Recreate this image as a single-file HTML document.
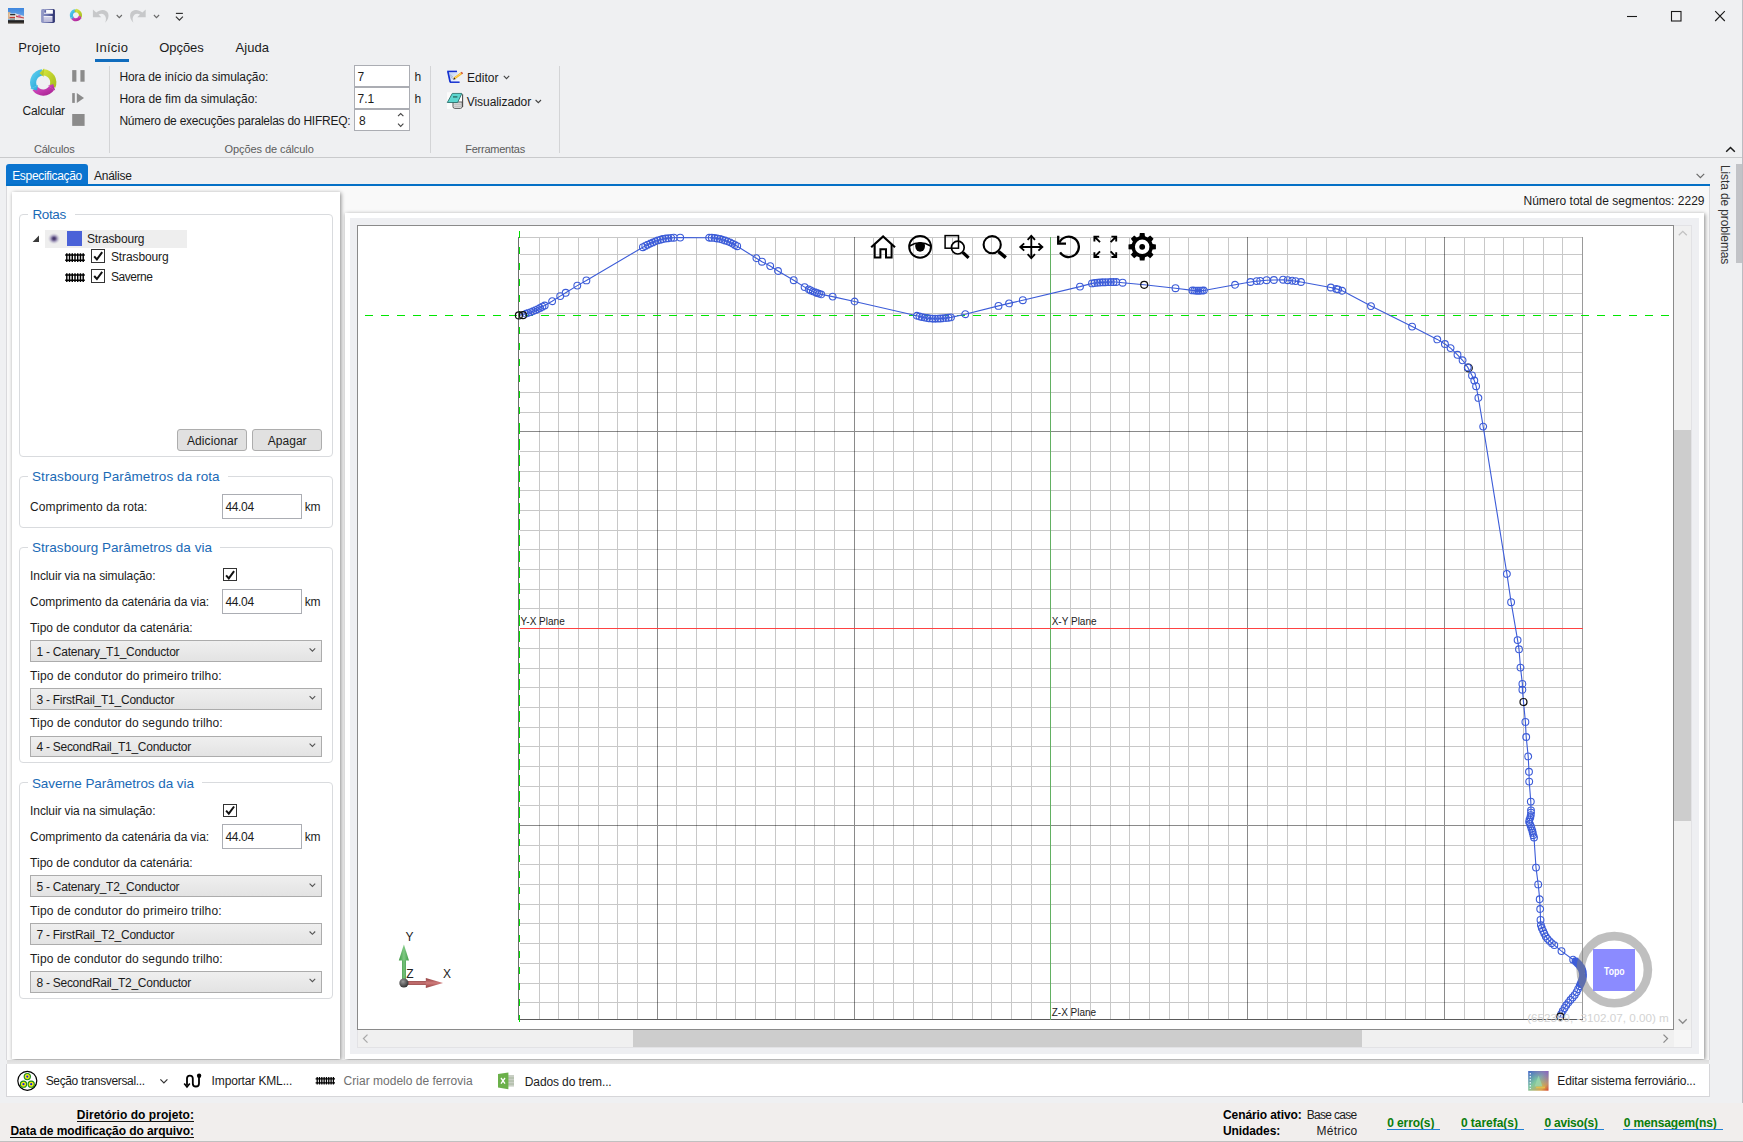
<!DOCTYPE html>
<html lang="pt"><head><meta charset="utf-8"><title>Railway</title>
<style>
html,body{margin:0;padding:0}
body{width:1743px;height:1142px;overflow:hidden;position:relative;background:#eff0f2;font-family:"Liberation Sans",sans-serif;}
.b{position:absolute;box-sizing:border-box}
.t{position:absolute;white-space:nowrap;line-height:16px;font-family:"Liberation Sans",sans-serif}
svg{position:absolute;left:0;top:0;overflow:visible}
svg text{font-family:"Liberation Sans",sans-serif}
</style></head><body>
<span class="t" style="left:18.20px;top:40px;font-size:13px;color:#1b1b1b;letter-spacing:0.135px;">Projeto</span>
<span class="t" style="left:95.60px;top:40px;font-size:13px;color:#1b1b1b;letter-spacing:0.246px;">Início</span>
<span class="t" style="left:159.30px;top:40px;font-size:13px;color:#1b1b1b;letter-spacing:-0.080px;">Opções</span>
<span class="t" style="left:235.60px;top:40px;font-size:13px;color:#1b1b1b;letter-spacing:0.037px;">Ajuda</span>
<div class="b" style="left:95px;top:59px;width:34px;height:3px;background:#0f6cbd;"></div>
<span class="t" style="left:22.50px;top:103px;font-size:12px;color:#1b1b1b;letter-spacing:-0.202px;">Calcular</span>
<span class="t" style="left:33.90px;top:141px;font-size:11px;color:#5c5c5c;letter-spacing:-0.198px;">Cálculos</span>
<div class="b" style="left:109px;top:66px;width:1px;height:87px;background:#d3d4d6;"></div>
<span class="t" style="left:119.40px;top:69px;font-size:12px;color:#1b1b1b;letter-spacing:-0.093px;">Hora de início da simulação:</span>
<span class="t" style="left:119.40px;top:91px;font-size:12px;color:#1b1b1b;letter-spacing:-0.050px;">Hora de fim da simulação:</span>
<span class="t" style="left:119.40px;top:113px;font-size:12px;color:#1b1b1b;letter-spacing:-0.246px;">Número de execuções paralelas do HIFREQ:</span>
<div class="b" style="left:354px;top:65px;width:56px;height:22px;background:#fff;border:1px solid #abadb3;"></div>
<div class="b" style="left:354px;top:87px;width:56px;height:22px;background:#fff;border:1px solid #abadb3;"></div>
<div class="b" style="left:354px;top:109px;width:56px;height:22px;background:#fff;border:1px solid #abadb3;"></div>
<span class="t" style="left:357.60px;top:69px;font-size:12px;color:#1b1b1b;">7</span>
<span class="t" style="left:357.60px;top:91px;font-size:12px;color:#1b1b1b;">7.1</span>
<span class="t" style="left:358.90px;top:113px;font-size:12px;color:#1b1b1b;">8</span>
<span class="t" style="left:414.40px;top:69px;font-size:12px;color:#1b1b1b;">h</span>
<span class="t" style="left:414.40px;top:91px;font-size:12px;color:#1b1b1b;">h</span>
<span class="t" style="left:224.60px;top:141px;font-size:11px;color:#5c5c5c;letter-spacing:-0.081px;">Opções de cálculo</span>
<div class="b" style="left:430px;top:66px;width:1px;height:87px;background:#d3d4d6;"></div>
<span class="t" style="left:467.10px;top:70px;font-size:12px;color:#1b1b1b;letter-spacing:0.010px;">Editor</span>
<span class="t" style="left:466.80px;top:94px;font-size:12px;color:#1b1b1b;letter-spacing:-0.068px;">Visualizador</span>
<span class="t" style="left:465.20px;top:141px;font-size:11px;color:#5c5c5c;letter-spacing:-0.236px;">Ferramentas</span>
<div class="b" style="left:559px;top:66px;width:1px;height:87px;background:#d3d4d6;"></div>
<div class="b" style="left:0px;top:157px;width:1743px;height:1px;background:#c9cacc;"></div>
<div class="b" style="left:6px;top:164px;width:82px;height:21px;background:#0b74cf;border-radius:3px 3px 0 0;"></div>
<span class="t" style="left:12.20px;top:168px;font-size:12px;color:#fff;letter-spacing:-0.328px;">Especificação</span>
<span class="t" style="left:94.00px;top:168px;font-size:12px;color:#1b1b1b;letter-spacing:-0.243px;">Análise</span>
<div class="b" style="left:6px;top:186px;width:1704px;height:874px;background:#f9f9f9;border-left:1px solid #d9d9dc;border-right:1px solid #d9d9dc;"></div>
<div class="b" style="left:6px;top:184px;width:1704px;height:2.4px;background:#0470c6;"></div>
<div class="b" style="left:1736px;top:164px;width:7px;height:99px;background:#c2c3c7;"></div>
<span class="t" style="left:1733px;top:164.6px;font-size:12px;color:#333;transform-origin:0 0;transform:rotate(90deg);letter-spacing:-0.123px;">Lista de problemas</span>
<div class="b" style="left:1742px;top:0px;width:1px;height:1103px;background:#bbbcc1;"></div>
<div class="b" style="left:12px;top:192px;width:328px;height:867px;background:#fff;box-shadow:1px 1px 4px rgba(0,0,0,.45);"></div>
<div class="b" style="left:19px;top:214px;width:314px;height:243px;border:1px solid #d9dbde;border-radius:4px;"></div>
<div class="b" style="left:19px;top:476px;width:314px;height:52px;border:1px solid #d9dbde;border-radius:4px;"></div>
<div class="b" style="left:19px;top:547px;width:314px;height:216px;border:1px solid #d9dbde;border-radius:4px;"></div>
<div class="b" style="left:19px;top:782px;width:314px;height:217px;border:1px solid #d9dbde;border-radius:4px;"></div>
<div class="b" style="left:28.1px;top:212px;width:46.6px;height:6px;background:#fff;"></div>
<span class="t" style="left:32.40px;top:207px;font-size:13.5px;color:#1a6ab6;letter-spacing:-0.367px;">Rotas</span>
<div class="b" style="left:27.700000000000003px;top:474px;width:200.4px;height:6px;background:#fff;"></div>
<span class="t" style="left:32.00px;top:469px;font-size:13.5px;color:#1a6ab6;letter-spacing:0.080px;">Strasbourg Parâmetros da rota</span>
<div class="b" style="left:27.700000000000003px;top:545px;width:192.8px;height:6px;background:#fff;"></div>
<span class="t" style="left:32.00px;top:540px;font-size:13.5px;color:#1a6ab6;letter-spacing:0.024px;">Strasbourg Parâmetros da via</span>
<div class="b" style="left:27.6px;top:780px;width:174.8px;height:6px;background:#fff;"></div>
<span class="t" style="left:31.90px;top:776px;font-size:13.5px;color:#1a6ab6;letter-spacing:-0.066px;">Saverne Parâmetros da via</span>
<div class="b" style="left:45px;top:230px;width:142px;height:18px;background:#eeeeee;"></div>
<div class="b" style="left:67px;top:231px;width:15px;height:15px;background:#4a62d8;"></div>
<span class="t" style="left:87.00px;top:231px;font-size:12px;color:#1b1b1b;letter-spacing:-0.134px;">Strasbourg</span>
<span class="t" style="left:110.90px;top:249px;font-size:12px;color:#1b1b1b;letter-spacing:-0.100px;">Strasbourg</span>
<span class="t" style="left:110.90px;top:269px;font-size:12px;color:#1b1b1b;letter-spacing:-0.450px;">Saverne</span>
<div class="b" style="left:91px;top:249px;width:14px;height:14px;background:#fff;border:1px solid #333;"></div>
<div class="b" style="left:91px;top:269px;width:14px;height:13.5px;background:#fff;border:1px solid #333;"></div>
<div class="b" style="left:177px;top:429px;width:70px;height:21.5px;background:#e1e1e1;border:1px solid #adadad;border-radius:3px;"></div>
<div class="b" style="left:252px;top:429px;width:70px;height:21.5px;background:#e1e1e1;border:1px solid #adadad;border-radius:3px;"></div>
<span class="t" style="left:186.90px;top:433px;font-size:12px;color:#1b1b1b;letter-spacing:0.109px;">Adicionar</span>
<span class="t" style="left:267.80px;top:433px;font-size:12px;color:#1b1b1b;letter-spacing:0.021px;">Apagar</span>
<div class="b" style="left:222px;top:493.5px;width:80px;height:25px;background:#fff;border:1px solid #abadb3;"></div>
<span class="t" style="left:30.10px;top:499px;font-size:12px;color:#1b1b1b;letter-spacing:0.066px;">Comprimento da rota:</span>
<span class="t" style="left:225.40px;top:499px;font-size:12px;color:#1b1b1b;letter-spacing:-0.333px;">44.04</span>
<span class="t" style="left:304.70px;top:499px;font-size:12px;color:#1b1b1b;letter-spacing:-0.197px;">km</span>
<span class="t" style="left:30.10px;top:568px;font-size:12px;color:#1b1b1b;letter-spacing:-0.111px;">Incluir via na simulação:</span>
<div class="b" style="left:223px;top:568px;width:14px;height:13px;background:#fff;border:1px solid #333;"></div>
<span class="t" style="left:30.10px;top:594px;font-size:12px;color:#1b1b1b;letter-spacing:-0.032px;">Comprimento da catenária da via:</span>
<div class="b" style="left:222.2px;top:588.5px;width:79.6px;height:25.4px;background:#fff;border:1px solid #abadb3;"></div>
<span class="t" style="left:225.40px;top:594px;font-size:12px;color:#1b1b1b;letter-spacing:-0.333px;">44.04</span>
<span class="t" style="left:304.70px;top:594px;font-size:12px;color:#1b1b1b;letter-spacing:-0.197px;">km</span>
<span class="t" style="left:30.10px;top:620px;font-size:12px;color:#1b1b1b;letter-spacing:0.009px;">Tipo de condutor da catenária:</span>
<div class="b" style="left:30px;top:640.2px;width:292px;height:21.4px;border:1px solid #acacac;background:linear-gradient(#efefef,#e3e3e3);"></div>
<span class="t" style="left:36.40px;top:644px;font-size:12px;color:#1b1b1b;letter-spacing:-0.231px;">1 - Catenary_T1_Conductor</span>
<span class="t" style="left:30.10px;top:668px;font-size:12px;color:#1b1b1b;letter-spacing:0.167px;">Tipo de condutor do primeiro trilho:</span>
<div class="b" style="left:30px;top:688.4px;width:292px;height:21.2px;border:1px solid #acacac;background:linear-gradient(#efefef,#e3e3e3);"></div>
<span class="t" style="left:36.40px;top:692px;font-size:12px;color:#1b1b1b;letter-spacing:-0.242px;">3 - FirstRail_T1_Conductor</span>
<span class="t" style="left:30.10px;top:715px;font-size:12px;color:#1b1b1b;letter-spacing:0.125px;">Tipo de condutor do segundo trilho:</span>
<div class="b" style="left:30px;top:736.4px;width:292px;height:20.4px;border:1px solid #acacac;background:linear-gradient(#efefef,#e3e3e3);"></div>
<span class="t" style="left:36.40px;top:739px;font-size:12px;color:#1b1b1b;letter-spacing:-0.255px;">4 - SecondRail_T1_Conductor</span>
<span class="t" style="left:30.10px;top:803px;font-size:12px;color:#1b1b1b;letter-spacing:-0.111px;">Incluir via na simulação:</span>
<div class="b" style="left:223px;top:804px;width:14px;height:13px;background:#fff;border:1px solid #333;"></div>
<span class="t" style="left:30.10px;top:829px;font-size:12px;color:#1b1b1b;letter-spacing:-0.032px;">Comprimento da catenária da via:</span>
<div class="b" style="left:222.2px;top:824.1px;width:79.6px;height:25.4px;background:#fff;border:1px solid #abadb3;"></div>
<span class="t" style="left:225.40px;top:829px;font-size:12px;color:#1b1b1b;letter-spacing:-0.333px;">44.04</span>
<span class="t" style="left:304.70px;top:829px;font-size:12px;color:#1b1b1b;letter-spacing:-0.197px;">km</span>
<span class="t" style="left:30.10px;top:855px;font-size:12px;color:#1b1b1b;letter-spacing:0.009px;">Tipo de condutor da catenária:</span>
<div class="b" style="left:30px;top:875.2px;width:292px;height:21.4px;border:1px solid #acacac;background:linear-gradient(#efefef,#e3e3e3);"></div>
<span class="t" style="left:36.40px;top:879px;font-size:12px;color:#1b1b1b;letter-spacing:-0.231px;">5 - Catenary_T2_Conductor</span>
<span class="t" style="left:30.10px;top:903px;font-size:12px;color:#1b1b1b;letter-spacing:0.167px;">Tipo de condutor do primeiro trilho:</span>
<div class="b" style="left:30px;top:923.4px;width:292px;height:21.2px;border:1px solid #acacac;background:linear-gradient(#efefef,#e3e3e3);"></div>
<span class="t" style="left:36.40px;top:927px;font-size:12px;color:#1b1b1b;letter-spacing:-0.242px;">7 - FirstRail_T2_Conductor</span>
<span class="t" style="left:30.10px;top:951px;font-size:12px;color:#1b1b1b;letter-spacing:0.125px;">Tipo de condutor do segundo trilho:</span>
<div class="b" style="left:30px;top:971.4px;width:292px;height:21.3px;border:1px solid #acacac;background:linear-gradient(#efefef,#e3e3e3);"></div>
<span class="t" style="left:36.40px;top:975px;font-size:12px;color:#1b1b1b;letter-spacing:-0.255px;">8 - SecondRail_T2_Conductor</span>
<div class="b" style="left:345px;top:213px;width:1359px;height:846px;background:#fff;box-shadow:1px 1px 4px rgba(0,0,0,.45);"></div>
<div class="b" style="left:350px;top:218px;width:1349px;height:836px;background:#eeeff2;"></div>
<div class="b" style="left:357px;top:225px;width:1335px;height:823px;background:#f0f0f0;border:1px solid #e2e2e5;"></div>
<div class="b" style="left:357px;top:225px;width:1317px;height:805px;background:#fff;border:1px solid #8a8a8a;"></div>
<div class="b" style="left:1674px;top:430px;width:17px;height:390.5px;background:#cdcdcd;"></div>
<div class="b" style="left:633.2px;top:1030px;width:728.4px;height:17px;background:#cdcdcd;"></div>
<div class="b" style="left:1674px;top:1030px;width:17px;height:17px;background:#f6f6f6;"></div>
<span class="t" style="left:1523.50px;top:193px;font-size:12px;color:#1b1b1b;letter-spacing:0.007px;">Número total de segmentos: 2229</span>
<div class="b" style="left:7px;top:1059.5px;width:1702px;height:4.5px;background:linear-gradient(#dcdcdc,#e6e6e6);"></div>
<div class="b" style="left:6px;top:1064px;width:1704px;height:32.5px;background:#fff;border:1px solid #d6d6d9;border-top:none;"></div>
<span class="t" style="left:45.70px;top:1073px;font-size:12px;color:#1b1b1b;letter-spacing:-0.355px;">Seção transversal...</span>
<span class="t" style="left:211.60px;top:1073px;font-size:12px;color:#1b1b1b;letter-spacing:-0.135px;">Importar KML...</span>
<span class="t" style="left:343.60px;top:1073px;font-size:12px;color:#707070;letter-spacing:0.012px;">Criar modelo de ferrovia</span>
<span class="t" style="left:524.80px;top:1074px;font-size:12px;color:#1b1b1b;letter-spacing:-0.120px;">Dados do trem...</span>
<span class="t" style="left:1557.30px;top:1073px;font-size:12px;color:#1b1b1b;letter-spacing:-0.147px;">Editar sistema ferroviário...</span>
<div class="b" style="left:0px;top:1103px;width:1743px;height:39px;background:#f1eeed;"></div>
<div class="b" style="left:0px;top:1140.5px;width:1743px;height:1.5px;background:#c0c0c0;"></div>
<span class="t" style="left:76.80px;top:1107px;font-size:12px;color:#000;letter-spacing:0.055px;font-weight:700;">Diretório do projeto:</span>
<div class="b" style="left:76.5px;top:1120.6px;width:117.4px;height:1px;background:#111"></div>
<span class="t" style="left:10.50px;top:1123px;font-size:12px;color:#000;letter-spacing:-0.066px;font-weight:700;">Data de modificação do arquivo:</span>
<div class="b" style="left:10.2px;top:1136.6px;width:183.7px;height:1px;background:#111"></div>
<span class="t" style="left:1223.00px;top:1107px;font-size:12px;color:#000;letter-spacing:-0.094px;font-weight:700;">Cenário ativo:</span>
<span class="t" style="left:1306.70px;top:1107px;font-size:12px;color:#1b1b1b;letter-spacing:-0.679px;">Base case</span>
<span class="t" style="left:1223.00px;top:1123px;font-size:12px;color:#000;letter-spacing:-0.101px;font-weight:700;">Unidades:</span>
<span class="t" style="left:1316.60px;top:1123px;font-size:12px;color:#1b1b1b;letter-spacing:0.226px;">Métrico</span>
<span class="t" style="left:1387.20px;top:1115px;font-size:12px;color:#0b7d0b;letter-spacing:-0.102px;font-weight:700;">0 erro(s)</span>
<div class="b" style="left:1386.9px;top:1128.6px;width:53.5px;height:1px;background:#1e7fd6"></div>
<span class="t" style="left:1460.90px;top:1115px;font-size:12px;color:#0b7d0b;letter-spacing:-0.026px;font-weight:700;">0 tarefa(s)</span>
<div class="b" style="left:1460.6px;top:1128.6px;width:63.4px;height:1px;background:#1e7fd6"></div>
<span class="t" style="left:1544.50px;top:1115px;font-size:12px;color:#0b7d0b;letter-spacing:-0.218px;font-weight:700;">0 aviso(s)</span>
<div class="b" style="left:1544.2px;top:1128.6px;width:59.7px;height:1px;background:#1e7fd6"></div>
<span class="t" style="left:1623.70px;top:1115px;font-size:12px;color:#0b7d0b;letter-spacing:-0.131px;font-weight:700;">0 mensagem(ns)</span>
<div class="b" style="left:1623.4px;top:1128.6px;width:99.3px;height:1px;background:#1e7fd6"></div>
<svg width="1743" height="1142" viewBox="0 0 1743 1142"><g shape-rendering="crispEdges" fill="none" stroke-width="1">
<path d="M539.5,237.0V1019.5M558.5,237.0V1019.5M578.5,237.0V1019.5M598.5,237.0V1019.5M617.5,237.0V1019.5M637.5,237.0V1019.5M676.5,237.0V1019.5M696.5,237.0V1019.5M716.5,237.0V1019.5M735.5,237.0V1019.5M755.5,237.0V1019.5M775.5,237.0V1019.5M795.5,237.0V1019.5M814.5,237.0V1019.5M834.5,237.0V1019.5M873.5,237.0V1019.5M893.5,237.0V1019.5M913.5,237.0V1019.5M932.5,237.0V1019.5M952.5,237.0V1019.5M972.5,237.0V1019.5M991.5,237.0V1019.5M1011.5,237.0V1019.5M1031.5,237.0V1019.5M1070.5,237.0V1019.5M1090.5,237.0V1019.5M1110.5,237.0V1019.5M1129.5,237.0V1019.5M1149.5,237.0V1019.5M1169.5,237.0V1019.5M1188.5,237.0V1019.5M1208.5,237.0V1019.5M1228.5,237.0V1019.5M1267.5,237.0V1019.5M1287.5,237.0V1019.5M1306.5,237.0V1019.5M1326.5,237.0V1019.5M1346.5,237.0V1019.5M1366.5,237.0V1019.5M1385.5,237.0V1019.5M1405.5,237.0V1019.5M1425.5,237.0V1019.5M1464.5,237.0V1019.5M1484.5,237.0V1019.5M1503.5,237.0V1019.5M1523.5,237.0V1019.5M1543.5,237.0V1019.5M1562.5,237.0V1019.5M1582.5,237.0V1019.5M519.5,254.5H1583.0M519.5,274.5H1583.0M519.5,293.5H1583.0M519.5,313.5H1583.0M519.5,333.5H1583.0M519.5,352.5H1583.0M519.5,372.5H1583.0M519.5,392.5H1583.0M519.5,412.5H1583.0M519.5,451.5H1583.0M519.5,471.5H1583.0M519.5,490.5H1583.0M519.5,510.5H1583.0M519.5,530.5H1583.0M519.5,549.5H1583.0M519.5,569.5H1583.0M519.5,589.5H1583.0M519.5,608.5H1583.0M519.5,648.5H1583.0M519.5,668.5H1583.0M519.5,687.5H1583.0M519.5,707.5H1583.0M519.5,727.5H1583.0M519.5,746.5H1583.0M519.5,766.5H1583.0M519.5,786.5H1583.0M519.5,805.5H1583.0M519.5,845.5H1583.0M519.5,864.5H1583.0M519.5,884.5H1583.0M519.5,904.5H1583.0M519.5,923.5H1583.0M519.5,943.5H1583.0M519.5,963.5H1583.0M519.5,983.5H1583.0M519.5,1002.5H1583.0M519.5,237.5H1583.0" stroke="rgba(0,0,0,0.215)"/>
<path d="M657.5,237.0V1019.5M854.5,237.0V1019.5M1247.5,237.0V1019.5M1444.5,237.0V1019.5M519.5,431.5H1583.0M519.5,825.5H1583.0" stroke="rgba(0,0,0,0.46)"/>
<path d="M1582.5,237.0V1019.5" stroke="#9a9a9a"/>
<path d="M518.5,237.0V1020.0" stroke="#707070"/>
<path d="M518,1019.5H1583.0" stroke="#5a5a5a"/>
<path d="M1050.5,237.0V1019.5" stroke="#62b062"/>
<path d="M519.5,628.5H1583.0" stroke="#ff4242"/>
<path d="M365,315.5H1669" stroke="#00e600" stroke-dasharray="8 8"/>
<path d="M519.5,231.3V423" stroke="#00e000" stroke-dasharray="6.4 9.6"/>
<path d="M519.5,423.3V839" stroke="#00e000" stroke-dasharray="10.4 5.6"/>
<path d="M519.5,839.3V1022.5" stroke="#00e000" stroke-dasharray="7 9"/>
</g>
<text x="520.6" y="624.7" font-size="10" fill="#222">Y-X Plane</text>
<text x="1051.7" y="624.7" font-size="10" fill="#222">X-Y Plane</text>
<text x="1051.7" y="1015.7" font-size="10" fill="#222">Z-X Plane</text>
<g fill="none" stroke="#111" stroke-width="1.2">
<circle cx="1468.4" cy="367.9" r="3.9"/>
</g>
<g fill="none" stroke="#3c5cd8" stroke-width="1.1">
<polyline points="518.9,315.4 525.8,313.8 531.0,312.0 537.0,309.5 544.7,305.5 552.1,301.2 560.2,296.1 565.7,292.8 577.3,285.6 586.4,280.4 642.9,247.2 647.0,245.0 650.5,243.3 654.0,241.8 657.5,240.5 661.0,239.5 664.5,238.7 668.0,238.2 671.0,237.9 673.8,237.7 680.2,237.6 709.1,237.7 712.0,237.8 715.0,238.1 718.0,238.6 721.0,239.3 724.0,240.2 727.0,241.2 730.0,242.4 733.0,243.8 737.2,246.2 756.4,258.2 762.0,261.7 770.2,266.1 778.0,271.0 793.7,280.2 804.6,287.1 808.7,289.4 811.5,290.8 814.0,291.9 816.0,292.7 818.0,293.4 821.3,294.4 832.6,296.6 854.6,301.5 916.8,315.8 921.0,316.9 924.0,317.5 927.0,318.0 930.0,318.4 932.6,318.7 936.0,318.7 939.0,318.6 942.0,318.4 945.0,318.1 948.0,317.7 951.0,317.4 965.2,314.2 998.5,305.9 1009.0,303.4 1022.8,300.2 1080.0,286.6 1092.0,283.4 1095.0,283.0 1098.0,282.7 1101.0,282.4 1104.0,282.2 1107.0,282.1 1110.0,282.0 1113.0,282.0 1116.2,282.0 1122.6,282.7 1144.2,284.8 1175.5,288.2 1192.5,290.4 1195.0,290.6 1197.5,290.7 1200.0,290.7 1202.0,290.6 1203.9,290.5 1235.1,284.8 1250.5,282.0 1256.7,281.1 1260.2,280.9 1266.6,280.2 1273.9,280.0 1283.1,279.7 1287.7,280.2 1292.3,280.7 1295.7,281.1 1301.0,282.0 1330.8,287.5 1336.3,288.9 1338.2,289.4 1342.3,290.8 1371.0,306.1 1412.1,326.6 1437.3,339.4 1444.9,344.0 1450.6,348.1 1457.5,354.8 1462.6,360.3 1467.8,367.4 1472.0,375.4 1474.3,380.5 1476.1,386.2 1478.4,397.9 1483.2,426.6 1506.9,573.9 1511.1,602.2 1517.6,640.1 1519.0,649.3 1520.5,667.6 1522.4,683.9 1522.4,689.7 1523.5,702.0 1525.4,721.9 1526.2,737.0 1528.2,756.4 1529.0,771.8 1529.2,781.6 1530.8,801.6 1531.0,810.4 1531.0,814.0 1530.5,817.0 1529.5,819.5 1529.0,821.5 1530.0,824.0 1530.8,826.1 1531.5,828.5 1532.5,831.4 1533.2,834.5 1534.0,837.5 1536.0,867.6 1538.2,884.4 1539.7,899.3 1540.2,909.0 1540.5,919.9 1540.9,925.1 1541.8,928.0 1543.2,931.0 1544.5,934.0 1546.1,937.0 1548.0,939.3 1549.9,941.4 1552.0,943.3 1554.3,945.1 1561.5,951.1 1573.2,959.7 1575.5,961.3 1577.4,963.0 1579.0,964.8 1580.3,966.5 1581.5,968.2 1582.3,970.2 1582.8,972.2 1583.0,974.2 1583.0,976.2 1582.7,978.2 1582.1,980.1 1581.4,982.1 1580.5,984.1 1579.6,986.1 1578.4,988.6 1577.2,991.0 1575.9,993.5 1574.2,995.5 1572.5,997.5 1570.7,999.5 1568.5,1002.5 1566.2,1005.4 1564.3,1008.4 1562.5,1011.4 1561.3,1014.0 1560.3,1016.6"/>
<path d="M522.4,313.8a3.4,3.4 0 1 0 6.8,0a3.4,3.4 0 1 0 -6.8,0M524.8,313.0a3.4,3.4 0 1 0 6.8,0a3.4,3.4 0 1 0 -6.8,0M527.3,312.1a3.4,3.4 0 1 0 6.8,0a3.4,3.4 0 1 0 -6.8,0M529.7,311.1a3.4,3.4 0 1 0 6.8,0a3.4,3.4 0 1 0 -6.8,0M532.1,310.1a3.4,3.4 0 1 0 6.8,0a3.4,3.4 0 1 0 -6.8,0M534.4,309.1a3.4,3.4 0 1 0 6.8,0a3.4,3.4 0 1 0 -6.8,0M536.7,307.9a3.4,3.4 0 1 0 6.8,0a3.4,3.4 0 1 0 -6.8,0M539.0,306.7a3.4,3.4 0 1 0 6.8,0a3.4,3.4 0 1 0 -6.8,0M541.3,305.5a3.4,3.4 0 1 0 6.8,0a3.4,3.4 0 1 0 -6.8,0M548.7,301.2a3.4,3.4 0 1 0 6.8,0a3.4,3.4 0 1 0 -6.8,0M556.8,296.1a3.4,3.4 0 1 0 6.8,0a3.4,3.4 0 1 0 -6.8,0M562.3,292.8a3.4,3.4 0 1 0 6.8,0a3.4,3.4 0 1 0 -6.8,0M573.9,285.6a3.4,3.4 0 1 0 6.8,0a3.4,3.4 0 1 0 -6.8,0M583.0,280.4a3.4,3.4 0 1 0 6.8,0a3.4,3.4 0 1 0 -6.8,0M639.5,247.2a3.4,3.4 0 1 0 6.8,0a3.4,3.4 0 1 0 -6.8,0M641.9,245.9a3.4,3.4 0 1 0 6.8,0a3.4,3.4 0 1 0 -6.8,0M644.3,244.7a3.4,3.4 0 1 0 6.8,0a3.4,3.4 0 1 0 -6.8,0M646.8,243.5a3.4,3.4 0 1 0 6.8,0a3.4,3.4 0 1 0 -6.8,0M649.3,242.4a3.4,3.4 0 1 0 6.8,0a3.4,3.4 0 1 0 -6.8,0M651.8,241.4a3.4,3.4 0 1 0 6.8,0a3.4,3.4 0 1 0 -6.8,0M654.3,240.4a3.4,3.4 0 1 0 6.8,0a3.4,3.4 0 1 0 -6.8,0M657.0,239.7a3.4,3.4 0 1 0 6.8,0a3.4,3.4 0 1 0 -6.8,0M659.6,239.0a3.4,3.4 0 1 0 6.8,0a3.4,3.4 0 1 0 -6.8,0M662.3,238.5a3.4,3.4 0 1 0 6.8,0a3.4,3.4 0 1 0 -6.8,0M665.0,238.2a3.4,3.4 0 1 0 6.8,0a3.4,3.4 0 1 0 -6.8,0M667.7,237.9a3.4,3.4 0 1 0 6.8,0a3.4,3.4 0 1 0 -6.8,0M670.4,237.7a3.4,3.4 0 1 0 6.8,0a3.4,3.4 0 1 0 -6.8,0M676.8,237.6a3.4,3.4 0 1 0 6.8,0a3.4,3.4 0 1 0 -6.8,0M705.7,237.7a3.4,3.4 0 1 0 6.8,0a3.4,3.4 0 1 0 -6.8,0M708.4,237.8a3.4,3.4 0 1 0 6.8,0a3.4,3.4 0 1 0 -6.8,0M711.1,238.0a3.4,3.4 0 1 0 6.8,0a3.4,3.4 0 1 0 -6.8,0M713.8,238.5a3.4,3.4 0 1 0 6.8,0a3.4,3.4 0 1 0 -6.8,0M716.4,239.0a3.4,3.4 0 1 0 6.8,0a3.4,3.4 0 1 0 -6.8,0M719.0,239.7a3.4,3.4 0 1 0 6.8,0a3.4,3.4 0 1 0 -6.8,0M721.6,240.5a3.4,3.4 0 1 0 6.8,0a3.4,3.4 0 1 0 -6.8,0M724.1,241.4a3.4,3.4 0 1 0 6.8,0a3.4,3.4 0 1 0 -6.8,0M726.6,242.4a3.4,3.4 0 1 0 6.8,0a3.4,3.4 0 1 0 -6.8,0M729.1,243.6a3.4,3.4 0 1 0 6.8,0a3.4,3.4 0 1 0 -6.8,0M731.5,244.9a3.4,3.4 0 1 0 6.8,0a3.4,3.4 0 1 0 -6.8,0M733.8,246.2a3.4,3.4 0 1 0 6.8,0a3.4,3.4 0 1 0 -6.8,0M753.0,258.2a3.4,3.4 0 1 0 6.8,0a3.4,3.4 0 1 0 -6.8,0M758.6,261.7a3.4,3.4 0 1 0 6.8,0a3.4,3.4 0 1 0 -6.8,0M766.8,266.1a3.4,3.4 0 1 0 6.8,0a3.4,3.4 0 1 0 -6.8,0M774.6,271.0a3.4,3.4 0 1 0 6.8,0a3.4,3.4 0 1 0 -6.8,0M790.3,280.2a3.4,3.4 0 1 0 6.8,0a3.4,3.4 0 1 0 -6.8,0M801.2,287.1a3.4,3.4 0 1 0 6.8,0a3.4,3.4 0 1 0 -6.8,0M805.3,289.4a3.4,3.4 0 1 0 6.8,0a3.4,3.4 0 1 0 -6.8,0M807.3,290.4a3.4,3.4 0 1 0 6.8,0a3.4,3.4 0 1 0 -6.8,0M809.4,291.4a3.4,3.4 0 1 0 6.8,0a3.4,3.4 0 1 0 -6.8,0M811.5,292.2a3.4,3.4 0 1 0 6.8,0a3.4,3.4 0 1 0 -6.8,0M813.6,293.0a3.4,3.4 0 1 0 6.8,0a3.4,3.4 0 1 0 -6.8,0M815.7,293.7a3.4,3.4 0 1 0 6.8,0a3.4,3.4 0 1 0 -6.8,0M817.9,294.4a3.4,3.4 0 1 0 6.8,0a3.4,3.4 0 1 0 -6.8,0M829.2,296.6a3.4,3.4 0 1 0 6.8,0a3.4,3.4 0 1 0 -6.8,0M851.2,301.5a3.4,3.4 0 1 0 6.8,0a3.4,3.4 0 1 0 -6.8,0M913.4,315.8a3.4,3.4 0 1 0 6.8,0a3.4,3.4 0 1 0 -6.8,0M916.0,316.5a3.4,3.4 0 1 0 6.8,0a3.4,3.4 0 1 0 -6.8,0M918.6,317.1a3.4,3.4 0 1 0 6.8,0a3.4,3.4 0 1 0 -6.8,0M921.2,317.6a3.4,3.4 0 1 0 6.8,0a3.4,3.4 0 1 0 -6.8,0M923.8,318.0a3.4,3.4 0 1 0 6.8,0a3.4,3.4 0 1 0 -6.8,0M926.4,318.4a3.4,3.4 0 1 0 6.8,0a3.4,3.4 0 1 0 -6.8,0M929.1,318.7a3.4,3.4 0 1 0 6.8,0a3.4,3.4 0 1 0 -6.8,0M931.7,318.7a3.4,3.4 0 1 0 6.8,0a3.4,3.4 0 1 0 -6.8,0M934.4,318.6a3.4,3.4 0 1 0 6.8,0a3.4,3.4 0 1 0 -6.8,0M937.0,318.5a3.4,3.4 0 1 0 6.8,0a3.4,3.4 0 1 0 -6.8,0M939.7,318.3a3.4,3.4 0 1 0 6.8,0a3.4,3.4 0 1 0 -6.8,0M942.3,318.0a3.4,3.4 0 1 0 6.8,0a3.4,3.4 0 1 0 -6.8,0M945.0,317.7a3.4,3.4 0 1 0 6.8,0a3.4,3.4 0 1 0 -6.8,0M947.6,317.4a3.4,3.4 0 1 0 6.8,0a3.4,3.4 0 1 0 -6.8,0M961.8,314.2a3.4,3.4 0 1 0 6.8,0a3.4,3.4 0 1 0 -6.8,0M995.1,305.9a3.4,3.4 0 1 0 6.8,0a3.4,3.4 0 1 0 -6.8,0M1005.6,303.4a3.4,3.4 0 1 0 6.8,0a3.4,3.4 0 1 0 -6.8,0M1019.4,300.2a3.4,3.4 0 1 0 6.8,0a3.4,3.4 0 1 0 -6.8,0M1076.6,286.6a3.4,3.4 0 1 0 6.8,0a3.4,3.4 0 1 0 -6.8,0M1088.6,283.4a3.4,3.4 0 1 0 6.8,0a3.4,3.4 0 1 0 -6.8,0M1091.3,283.0a3.4,3.4 0 1 0 6.8,0a3.4,3.4 0 1 0 -6.8,0M1094.0,282.8a3.4,3.4 0 1 0 6.8,0a3.4,3.4 0 1 0 -6.8,0M1096.6,282.5a3.4,3.4 0 1 0 6.8,0a3.4,3.4 0 1 0 -6.8,0M1099.3,282.3a3.4,3.4 0 1 0 6.8,0a3.4,3.4 0 1 0 -6.8,0M1102.0,282.2a3.4,3.4 0 1 0 6.8,0a3.4,3.4 0 1 0 -6.8,0M1104.7,282.1a3.4,3.4 0 1 0 6.8,0a3.4,3.4 0 1 0 -6.8,0M1107.4,282.0a3.4,3.4 0 1 0 6.8,0a3.4,3.4 0 1 0 -6.8,0M1110.1,282.0a3.4,3.4 0 1 0 6.8,0a3.4,3.4 0 1 0 -6.8,0M1112.8,282.0a3.4,3.4 0 1 0 6.8,0a3.4,3.4 0 1 0 -6.8,0M1119.2,282.7a3.4,3.4 0 1 0 6.8,0a3.4,3.4 0 1 0 -6.8,0M1172.1,288.2a3.4,3.4 0 1 0 6.8,0a3.4,3.4 0 1 0 -6.8,0M1189.1,290.4a3.4,3.4 0 1 0 6.8,0a3.4,3.4 0 1 0 -6.8,0M1191.0,290.6a3.4,3.4 0 1 0 6.8,0a3.4,3.4 0 1 0 -6.8,0M1192.9,290.7a3.4,3.4 0 1 0 6.8,0a3.4,3.4 0 1 0 -6.8,0M1194.8,290.7a3.4,3.4 0 1 0 6.8,0a3.4,3.4 0 1 0 -6.8,0M1196.7,290.7a3.4,3.4 0 1 0 6.8,0a3.4,3.4 0 1 0 -6.8,0M1198.6,290.6a3.4,3.4 0 1 0 6.8,0a3.4,3.4 0 1 0 -6.8,0M1200.5,290.5a3.4,3.4 0 1 0 6.8,0a3.4,3.4 0 1 0 -6.8,0M1231.7,284.8a3.4,3.4 0 1 0 6.8,0a3.4,3.4 0 1 0 -6.8,0M1247.1,282.0a3.4,3.4 0 1 0 6.8,0a3.4,3.4 0 1 0 -6.8,0M1253.3,281.1a3.4,3.4 0 1 0 6.8,0a3.4,3.4 0 1 0 -6.8,0M1256.8,280.9a3.4,3.4 0 1 0 6.8,0a3.4,3.4 0 1 0 -6.8,0M1263.2,280.2a3.4,3.4 0 1 0 6.8,0a3.4,3.4 0 1 0 -6.8,0M1270.5,280.0a3.4,3.4 0 1 0 6.8,0a3.4,3.4 0 1 0 -6.8,0M1279.7,279.7a3.4,3.4 0 1 0 6.8,0a3.4,3.4 0 1 0 -6.8,0M1284.3,280.2a3.4,3.4 0 1 0 6.8,0a3.4,3.4 0 1 0 -6.8,0M1288.9,280.7a3.4,3.4 0 1 0 6.8,0a3.4,3.4 0 1 0 -6.8,0M1292.3,281.1a3.4,3.4 0 1 0 6.8,0a3.4,3.4 0 1 0 -6.8,0M1297.6,282.0a3.4,3.4 0 1 0 6.8,0a3.4,3.4 0 1 0 -6.8,0M1327.4,287.5a3.4,3.4 0 1 0 6.8,0a3.4,3.4 0 1 0 -6.8,0M1332.9,288.9a3.4,3.4 0 1 0 6.8,0a3.4,3.4 0 1 0 -6.8,0M1334.8,289.4a3.4,3.4 0 1 0 6.8,0a3.4,3.4 0 1 0 -6.8,0M1338.9,290.8a3.4,3.4 0 1 0 6.8,0a3.4,3.4 0 1 0 -6.8,0M1367.6,306.1a3.4,3.4 0 1 0 6.8,0a3.4,3.4 0 1 0 -6.8,0M1408.7,326.6a3.4,3.4 0 1 0 6.8,0a3.4,3.4 0 1 0 -6.8,0M1433.9,339.4a3.4,3.4 0 1 0 6.8,0a3.4,3.4 0 1 0 -6.8,0M1441.5,344.0a3.4,3.4 0 1 0 6.8,0a3.4,3.4 0 1 0 -6.8,0M1447.2,348.1a3.4,3.4 0 1 0 6.8,0a3.4,3.4 0 1 0 -6.8,0M1454.1,354.8a3.4,3.4 0 1 0 6.8,0a3.4,3.4 0 1 0 -6.8,0M1459.2,360.3a3.4,3.4 0 1 0 6.8,0a3.4,3.4 0 1 0 -6.8,0M1464.4,367.4a3.4,3.4 0 1 0 6.8,0a3.4,3.4 0 1 0 -6.8,0M1468.6,375.4a3.4,3.4 0 1 0 6.8,0a3.4,3.4 0 1 0 -6.8,0M1470.9,380.5a3.4,3.4 0 1 0 6.8,0a3.4,3.4 0 1 0 -6.8,0M1472.7,386.2a3.4,3.4 0 1 0 6.8,0a3.4,3.4 0 1 0 -6.8,0M1475.0,397.9a3.4,3.4 0 1 0 6.8,0a3.4,3.4 0 1 0 -6.8,0M1479.8,426.6a3.4,3.4 0 1 0 6.8,0a3.4,3.4 0 1 0 -6.8,0M1503.5,573.9a3.4,3.4 0 1 0 6.8,0a3.4,3.4 0 1 0 -6.8,0M1507.7,602.2a3.4,3.4 0 1 0 6.8,0a3.4,3.4 0 1 0 -6.8,0M1514.2,640.1a3.4,3.4 0 1 0 6.8,0a3.4,3.4 0 1 0 -6.8,0M1515.6,649.3a3.4,3.4 0 1 0 6.8,0a3.4,3.4 0 1 0 -6.8,0M1517.1,667.6a3.4,3.4 0 1 0 6.8,0a3.4,3.4 0 1 0 -6.8,0M1519.0,683.9a3.4,3.4 0 1 0 6.8,0a3.4,3.4 0 1 0 -6.8,0M1519.0,689.7a3.4,3.4 0 1 0 6.8,0a3.4,3.4 0 1 0 -6.8,0M1522.0,721.9a3.4,3.4 0 1 0 6.8,0a3.4,3.4 0 1 0 -6.8,0M1522.8,737.0a3.4,3.4 0 1 0 6.8,0a3.4,3.4 0 1 0 -6.8,0M1524.8,756.4a3.4,3.4 0 1 0 6.8,0a3.4,3.4 0 1 0 -6.8,0M1525.6,771.8a3.4,3.4 0 1 0 6.8,0a3.4,3.4 0 1 0 -6.8,0M1525.8,781.6a3.4,3.4 0 1 0 6.8,0a3.4,3.4 0 1 0 -6.8,0M1527.4,801.6a3.4,3.4 0 1 0 6.8,0a3.4,3.4 0 1 0 -6.8,0M1527.6,810.4a3.4,3.4 0 1 0 6.8,0a3.4,3.4 0 1 0 -6.8,0M1527.6,812.7a3.4,3.4 0 1 0 6.8,0a3.4,3.4 0 1 0 -6.8,0M1527.4,815.1a3.4,3.4 0 1 0 6.8,0a3.4,3.4 0 1 0 -6.8,0M1526.9,817.4a3.4,3.4 0 1 0 6.8,0a3.4,3.4 0 1 0 -6.8,0M1526.1,819.6a3.4,3.4 0 1 0 6.8,0a3.4,3.4 0 1 0 -6.8,0M1525.7,821.8a3.4,3.4 0 1 0 6.8,0a3.4,3.4 0 1 0 -6.8,0M1526.6,824.0a3.4,3.4 0 1 0 6.8,0a3.4,3.4 0 1 0 -6.8,0M1527.4,826.2a3.4,3.4 0 1 0 6.8,0a3.4,3.4 0 1 0 -6.8,0M1528.1,828.5a3.4,3.4 0 1 0 6.8,0a3.4,3.4 0 1 0 -6.8,0M1528.9,830.7a3.4,3.4 0 1 0 6.8,0a3.4,3.4 0 1 0 -6.8,0M1529.4,832.9a3.4,3.4 0 1 0 6.8,0a3.4,3.4 0 1 0 -6.8,0M1530.0,835.2a3.4,3.4 0 1 0 6.8,0a3.4,3.4 0 1 0 -6.8,0M1530.6,837.5a3.4,3.4 0 1 0 6.8,0a3.4,3.4 0 1 0 -6.8,0M1532.6,867.6a3.4,3.4 0 1 0 6.8,0a3.4,3.4 0 1 0 -6.8,0M1534.8,884.4a3.4,3.4 0 1 0 6.8,0a3.4,3.4 0 1 0 -6.8,0M1536.3,899.3a3.4,3.4 0 1 0 6.8,0a3.4,3.4 0 1 0 -6.8,0M1536.8,909.0a3.4,3.4 0 1 0 6.8,0a3.4,3.4 0 1 0 -6.8,0M1537.1,919.9a3.4,3.4 0 1 0 6.8,0a3.4,3.4 0 1 0 -6.8,0M1537.5,925.1a3.4,3.4 0 1 0 6.8,0a3.4,3.4 0 1 0 -6.8,0M1538.4,928.0a3.4,3.4 0 1 0 6.8,0a3.4,3.4 0 1 0 -6.8,0M1539.7,930.8a3.4,3.4 0 1 0 6.8,0a3.4,3.4 0 1 0 -6.8,0M1540.9,933.6a3.4,3.4 0 1 0 6.8,0a3.4,3.4 0 1 0 -6.8,0M1542.4,936.4a3.4,3.4 0 1 0 6.8,0a3.4,3.4 0 1 0 -6.8,0M1544.2,938.8a3.4,3.4 0 1 0 6.8,0a3.4,3.4 0 1 0 -6.8,0M1546.2,941.1a3.4,3.4 0 1 0 6.8,0a3.4,3.4 0 1 0 -6.8,0M1548.5,943.2a3.4,3.4 0 1 0 6.8,0a3.4,3.4 0 1 0 -6.8,0M1550.9,945.1a3.4,3.4 0 1 0 6.8,0a3.4,3.4 0 1 0 -6.8,0M1558.1,951.1a3.4,3.4 0 1 0 6.8,0a3.4,3.4 0 1 0 -6.8,0M1569.8,959.7a3.4,3.4 0 1 0 6.8,0a3.4,3.4 0 1 0 -6.8,0M1572.1,961.3a3.4,3.4 0 1 0 6.8,0a3.4,3.4 0 1 0 -6.8,0M1573.0,962.1a3.4,3.4 0 1 0 6.8,0a3.4,3.4 0 1 0 -6.8,0M1573.9,962.9a3.4,3.4 0 1 0 6.8,0a3.4,3.4 0 1 0 -6.8,0M1574.7,963.8a3.4,3.4 0 1 0 6.8,0a3.4,3.4 0 1 0 -6.8,0M1575.6,964.8a3.4,3.4 0 1 0 6.8,0a3.4,3.4 0 1 0 -6.8,0M1576.3,965.7a3.4,3.4 0 1 0 6.8,0a3.4,3.4 0 1 0 -6.8,0M1577.0,966.7a3.4,3.4 0 1 0 6.8,0a3.4,3.4 0 1 0 -6.8,0M1577.8,967.7a3.4,3.4 0 1 0 6.8,0a3.4,3.4 0 1 0 -6.8,0M1578.3,968.8a3.4,3.4 0 1 0 6.8,0a3.4,3.4 0 1 0 -6.8,0M1578.8,969.9a3.4,3.4 0 1 0 6.8,0a3.4,3.4 0 1 0 -6.8,0M1579.1,971.1a3.4,3.4 0 1 0 6.8,0a3.4,3.4 0 1 0 -6.8,0M1579.4,972.3a3.4,3.4 0 1 0 6.8,0a3.4,3.4 0 1 0 -6.8,0M1579.5,973.5a3.4,3.4 0 1 0 6.8,0a3.4,3.4 0 1 0 -6.8,0M1579.6,974.7a3.4,3.4 0 1 0 6.8,0a3.4,3.4 0 1 0 -6.8,0M1579.6,975.9a3.4,3.4 0 1 0 6.8,0a3.4,3.4 0 1 0 -6.8,0M1579.5,977.2a3.4,3.4 0 1 0 6.8,0a3.4,3.4 0 1 0 -6.8,0M1579.2,978.4a3.4,3.4 0 1 0 6.8,0a3.4,3.4 0 1 0 -6.8,0M1578.9,979.5a3.4,3.4 0 1 0 6.8,0a3.4,3.4 0 1 0 -6.8,0M1578.5,980.7a3.4,3.4 0 1 0 6.8,0a3.4,3.4 0 1 0 -6.8,0M1578.1,981.9a3.4,3.4 0 1 0 6.8,0a3.4,3.4 0 1 0 -6.8,0M1577.6,983.0a3.4,3.4 0 1 0 6.8,0a3.4,3.4 0 1 0 -6.8,0M1577.1,984.1a3.4,3.4 0 1 0 6.8,0a3.4,3.4 0 1 0 -6.8,0M1576.2,986.1a3.4,3.4 0 1 0 6.8,0a3.4,3.4 0 1 0 -6.8,0M1574.7,989.1a3.4,3.4 0 1 0 6.8,0a3.4,3.4 0 1 0 -6.8,0M1573.2,992.1a3.4,3.4 0 1 0 6.8,0a3.4,3.4 0 1 0 -6.8,0M1571.3,994.9a3.4,3.4 0 1 0 6.8,0a3.4,3.4 0 1 0 -6.8,0M1569.2,997.4a3.4,3.4 0 1 0 6.8,0a3.4,3.4 0 1 0 -6.8,0M1567.0,1000.0a3.4,3.4 0 1 0 6.8,0a3.4,3.4 0 1 0 -6.8,0M1565.0,1002.7a3.4,3.4 0 1 0 6.8,0a3.4,3.4 0 1 0 -6.8,0M1562.9,1005.3a3.4,3.4 0 1 0 6.8,0a3.4,3.4 0 1 0 -6.8,0M1561.1,1008.1a3.4,3.4 0 1 0 6.8,0a3.4,3.4 0 1 0 -6.8,0M1559.4,1011.0a3.4,3.4 0 1 0 6.8,0a3.4,3.4 0 1 0 -6.8,0M1557.9,1014.0a3.4,3.4 0 1 0 6.8,0a3.4,3.4 0 1 0 -6.8,0"/>
</g>
<g fill="none" stroke="#111" stroke-width="1.2">
<circle cx="518.9" cy="315.4" r="3.5"/>
<circle cx="522.9" cy="315.2" r="3.5"/>
<circle cx="1144.2" cy="284.8" r="3.5"/>
<circle cx="1523.5" cy="702" r="3.5"/>
<circle cx="1560.3" cy="1016.6" r="3.5"/>
</g>
<circle cx="1614.3" cy="969.7" r="33.6" fill="none" stroke="#808080" stroke-opacity=".5" stroke-width="8.6"/>
<rect x="1593" y="949" width="42" height="42" fill="#8b8bff"/>
<text x="1604" y="975.3" font-size="10.5" font-weight="700" fill="#fff" textLength="20.6" lengthAdjust="spacingAndGlyphs">Topo</text>
<text x="1668.8" y="1021.8" font-size="11.7" fill="#d3d3d3" text-anchor="end">(652369, -3102.07, 0.00) m</text>
<defs><linearGradient id="gy" x1="0" x2="1"><stop offset="0" stop-color="#3f9a45"/><stop offset=".5" stop-color="#7fc983"/><stop offset="1" stop-color="#3f9a45"/></linearGradient><linearGradient id="gx" x1="0" x2="0" y1="0" y2="1"><stop offset="0" stop-color="#8f3c3c"/><stop offset=".5" stop-color="#cf7b7b"/><stop offset="1" stop-color="#8f3c3c"/></linearGradient><radialGradient id="gs" cx=".4" cy=".35" r=".7"><stop offset="0" stop-color="#9a9a9a"/><stop offset="1" stop-color="#2a2a2a"/></radialGradient></defs>
<rect x="402.1" y="959" width="3.8" height="22" fill="url(#gy)"/>
<polygon points="403.9,944.4 409,960.6 398.8,960.6" fill="url(#gy)"/>
<rect x="406" y="981.1" width="20.5" height="3.8" fill="url(#gx)"/>
<polygon points="443,983 425.8,977.9 425.8,988.1" fill="url(#gx)"/>
<circle cx="403.9" cy="983" r="4.6" fill="url(#gs)"/>
<text x="405.6" y="941" font-size="12" fill="#222">Y</text>
<text x="406.3" y="978.2" font-size="12" fill="#222">Z</text>
<text x="443" y="978.2" font-size="12" fill="#222">X</text>
<g fill="none" stroke="#000" stroke-width="2" stroke-linejoin="miter">
<path d="M871.2,247.2 L883.1,236.4 L895,247.2" stroke-width="2.2"/>
<path d="M874.7,244.5V257.4H880.4V249.2H886V257.4H891.6V244.5"/>
<circle cx="920.1" cy="246.8" r="10.9"/>
<path d="M909.6,246 Q920.1,239.5 930.6,246" stroke-width="1.6"/>
<path d="M915.6,243.3 A4.8,4.8 0 1 0 924.6,243.3 Z" fill="#000" stroke="none"/>
<circle cx="920.1" cy="247" r="4.7" fill="#000" stroke="none"/>
<rect x="945.1" y="235.6" width="13.4" height="12.6" stroke-width="1.5"/>
<circle cx="957.8" cy="247.6" r="6.4" stroke-width="1.7"/>
<path d="M962.8,252.4L968.6,257.8" stroke-width="3.2"/>
<circle cx="992.2" cy="244.7" r="8.6" stroke-width="2.1"/>
<path d="M998.6,251.6L1005.8,257.6" stroke-width="3.6"/>
<path d="M1031.3,236.2V257.8M1020.4,247H1042.2" stroke-width="1.8"/>
<path d="M1027.6,239.8L1031.3,235.9L1035,239.8M1027.6,254.2L1031.3,258.1L1035,254.2M1024.2,243.3L1020.2,247L1024.2,250.7M1038.4,243.3L1042.4,247L1038.4,250.7" stroke-width="1.8"/>
<path d="M1059.4,242.6 A10.2,10.2 0 1 1 1060.1,252.4" stroke-width="2.3"/>
<path d="M1058.2,235.8V243.6H1066" stroke-width="2.3"/>
<path d="M1094.4,241.4V236.6H1099.2M1094.8,237L1100,242.2 M1116.2,241.4V236.6H1111.4M1115.8,237L1110.6,242.2 M1094.4,252.2V257H1099.2M1094.8,256.6L1100,251.4 M1116.2,252.2V257H1111.4M1115.8,256.6L1110.6,251.4" stroke-width="1.9"/>
</g>
<path fill-rule="evenodd" fill="#000" d="M1139.42,236.36L1139.85,233.10L1144.55,233.10L1144.98,236.36L1147.62,237.46L1150.22,235.45L1153.55,238.78L1151.54,241.38L1152.64,244.02L1155.90,244.45L1155.90,249.15L1152.64,249.58L1151.54,252.22L1153.55,254.82L1150.22,258.15L1147.62,256.14L1144.98,257.24L1144.55,260.50L1139.85,260.50L1139.42,257.24L1136.78,256.14L1134.18,258.15L1130.85,254.82L1132.86,252.22L1131.76,249.58L1128.50,249.15L1128.50,244.45L1131.76,244.02L1132.86,241.38L1130.85,238.78L1134.18,235.45L1136.78,237.46Z M1149.5,246.8a7.3,7.3 0 1 0 -14.6,0a7.3,7.3 0 1 0 14.6,0Z"/>
<circle cx="1142.2" cy="246.8" r="2.9" fill="#000"/>
<g fill="none" stroke-width="1.3">
<path d="M1678.8,235.3L1682.8,231.3L1686.8,235.3" stroke="#c2c2c2"/>
<path d="M1678.7,1019.3L1682.7,1023.3L1686.7,1019.3" stroke="#8a8a8a"/>
<path d="M367.5,1034.6L363.5,1038.6L367.5,1042.6" stroke="#a8a8a8"/>
<path d="M1663.5,1034.6L1667.5,1038.6L1663.5,1042.6" stroke="#8a8a8a"/>
</g>
<defs><linearGradient id="sky" x1="0" y1="0" x2="0" y2="1"><stop offset="0" stop-color="#3d86de"/><stop offset="1" stop-color="#8fbcec"/></linearGradient><linearGradient id="gnd" x1="0" y1="0" x2="0" y2="1"><stop offset="0" stop-color="#191818"/><stop offset=".55" stop-color="#2b2826"/><stop offset="1" stop-color="#b9b2aa"/></linearGradient></defs>
<rect x="8" y="8" width="16" height="16" fill="url(#sky)"/><polygon points="8,12 10.4,12.2 10.4,19 8,19" fill="#d9b48a"/><polygon points="15,13.2 24,16 24,20.4 15,20.4" fill="#e3dcd8"/><polygon points="16,15.4 24,17.4 24,18.6 16,17" fill="#c9474a"/><rect x="18.2" y="15.2" width="2.3" height="1.7" fill="#c45aa6"/><rect x="9.6" y="13.6" width="6.2" height="6.8" fill="#ecebe8"/><rect x="10.1" y="14" width="5.2" height="1.3" fill="#2b2f2e"/><rect x="9.6" y="16.8" width="5.4" height="1.5" fill="#c23a33"/><rect x="9.6" y="18.3" width="5.4" height="1.9" fill="#8c9c98"/><rect x="8" y="20.2" width="16" height="3.8" fill="url(#gnd)"/>
<defs><linearGradient id="fl" x1="0" y1="0" x2="1" y2="0"><stop offset="0" stop-color="#9ca2cc"/><stop offset=".5" stop-color="#6870ac"/><stop offset="1" stop-color="#262b68"/></linearGradient><linearGradient id="fl2" x1="0" y1="0" x2="0" y2="1"><stop offset="0" stop-color="#ffffff"/><stop offset=".25" stop-color="#cfcfe6"/><stop offset="1" stop-color="#b7b6d6"/></linearGradient></defs>
<rect x="41" y="9" width="13.9" height="13.9" rx="1.6" fill="url(#fl)"/><rect x="43.9" y="9.8" width="9" height="3.9" fill="#fbfbfe"/><rect x="44.2" y="10.1" width="1.9" height="2.6" fill="#5a62a6"/><rect x="43.6" y="16" width="8.9" height="6" fill="url(#fl2)"/>
<defs><linearGradient id="rg75_0" x1="0" y1="0" x2="1" y2="1"><stop offset="0" stop-color="#d6e43c"/><stop offset="1" stop-color="#a4bc1c"/></linearGradient></defs><path d="M81.47,17.68A6.1,6.1 0 0 0 76.22,9.11L76.06,12.20A3.0,3.0 0 0 1 78.64,16.42Z" fill="url(#rg75_0)"/><defs><linearGradient id="rg75_1" x1="0" y1="0" x2="1" y2="1"><stop offset="0" stop-color="#6ad6f3"/><stop offset="1" stop-color="#1a9fd4"/></linearGradient></defs><path d="M75.26,9.13A6.1,6.1 0 0 0 70.46,17.97L73.23,16.56A3.0,3.0 0 0 1 75.59,12.22Z" fill="url(#rg75_1)"/><defs><linearGradient id="rg75_2" x1="0" y1="0" x2="1" y2="1"><stop offset="0" stop-color="#dc52ca"/><stop offset="1" stop-color="#a21c8a"/></linearGradient></defs><path d="M70.96,18.79A6.1,6.1 0 0 0 81.02,18.52L78.42,16.83A3.0,3.0 0 0 1 73.47,16.96Z" fill="url(#rg75_2)"/><path d="M76.37,8.52L74.20,10.98L76.07,12.81Z" fill="url(#rg75_0)"/><path d="M69.88,18.14L73.10,18.79L73.74,16.25Z" fill="url(#rg75_1)"/><path d="M81.45,18.95L80.41,15.83L77.89,16.54Z" fill="url(#rg75_2)"/>
<path d="M92.9,9.4V17.3H101.3L98.6,14.6C100.4,13.2 102.8,13.4 104.2,14.8C106.3,16.9 106.4,19.6 105.2,22.7C108,20 109.2,16.6 108.2,13.6C106.8,9.6 101,8.4 96.2,12.6Z" fill="#c7c8ca"/><g transform="translate(238.6,0) scale(-1,1)"><path d="M92.9,9.4V17.3H101.3L98.6,14.6C100.4,13.2 102.8,13.4 104.2,14.8C106.3,16.9 106.4,19.6 105.2,22.7C108,20 109.2,16.6 108.2,13.6C106.8,9.6 101,8.4 96.2,12.6Z" fill="#c7c8ca"/></g>
<g fill="none" stroke="#6a6a6a" stroke-width="1.15"><path d="M116.7,15L119.3,17.6L121.9,15"/><path d="M153.9,15L156.5,17.6L159.1,15"/></g>
<g fill="none" stroke="#333" stroke-width="1.15"><path d="M175.9,13.4H182.9"/><path d="M175.9,16.7L179.4,20.2L182.9,16.7"/></g>
<g fill="none" stroke="#1a1a1a" stroke-width="1.1"><path d="M1627,16.5H1637"/><rect x="1671.5" y="11.5" width="9.5" height="9.5"/><path d="M1715.2,11.2L1724.8,21M1724.8,11.2L1715.2,21"/></g>
<path d="M1726.2,151.8L1730.5,147.5L1734.8,151.8" fill="none" stroke="#1a1a1a" stroke-width="1.5"/>
<path d="M1696.6,173.9L1700.4,177.7L1704.2,173.9" fill="none" stroke="#6a6a6a" stroke-width="1.2"/>
<defs><linearGradient id="rg43_0" x1="0" y1="0" x2="1" y2="1"><stop offset="0" stop-color="#d6e43c"/><stop offset="1" stop-color="#a4bc1c"/></linearGradient></defs><path d="M55.26,87.87A13.2,13.2 0 0 0 43.89,69.32L43.57,75.51A7.0,7.0 0 0 1 49.59,85.35Z" fill="url(#rg43_0)"/><defs><linearGradient id="rg43_1" x1="0" y1="0" x2="1" y2="1"><stop offset="0" stop-color="#6ad6f3"/><stop offset="1" stop-color="#1a9fd4"/></linearGradient></defs><path d="M41.82,69.37A13.2,13.2 0 0 0 31.44,88.49L36.96,85.68A7.0,7.0 0 0 1 42.47,75.54Z" fill="url(#rg43_1)"/><defs><linearGradient id="rg43_2" x1="0" y1="0" x2="1" y2="1"><stop offset="0" stop-color="#dc52ca"/><stop offset="1" stop-color="#a21c8a"/></linearGradient></defs><path d="M32.52,90.26A13.2,13.2 0 0 0 54.27,89.69L49.07,86.31A7.0,7.0 0 0 1 37.54,86.61Z" fill="url(#rg43_2)"/><path d="M44.20,68.14L39.42,73.14L43.60,76.71Z" fill="url(#rg43_0)"/><path d="M30.26,88.81L36.98,90.46L37.99,85.04Z" fill="url(#rg43_1)"/><path d="M55.14,90.55L53.20,83.91L48.01,85.74Z" fill="url(#rg43_2)"/>
<g fill="#8b8b8b"><rect x="72.2" y="70.1" width="4.2" height="11.6"/><rect x="80.4" y="70.1" width="4.2" height="11.6"/><rect x="72.2" y="93.1" width="2.6" height="9.8"/><polygon points="76.8,93.1 84,98 76.8,102.9"/><rect x="72.2" y="114" width="12.4" height="11.9"/></g>
<g fill="none" stroke="#444" stroke-width="1.1"><path d="M398,116.2L400.7,113.5L403.4,116.2"/><path d="M398,123.7L400.7,126.4L403.4,123.7"/></g>
<defs><linearGradient id="edg" x1="0" y1="0" x2="1" y2="1"><stop offset="0" stop-color="#b9cdf2"/><stop offset="1" stop-color="#ffffff"/></linearGradient></defs>
<polygon points="448.2,71.6 457.2,71.6 460,82 450.3,82" fill="url(#edg)"/><path d="M447.2,71.4H457" stroke="#1430d0" stroke-width="1.5"/><path d="M447.9,71.6L450.2,82.2" stroke="#1430d0" stroke-width="1.7"/><path d="M450,82.2H459.6" stroke="#1430d0" stroke-width="1.5"/><path d="M449.6,74.4L453,77.2M450.4,76.8L452.6,78.6" stroke="#9fb0cc" stroke-width=".9"/><path d="M454,78.6L461.6,73.2" stroke="#f7b21a" stroke-width="2.2"/><path d="M454.6,78L461.2,73.3" stroke="#ffe27a" stroke-width=".8"/><path d="M461.3,73.4L462.5,72.6" stroke="#d1503a" stroke-width="2.2"/><polygon points="452.9,79.5 454.4,77.6 455.5,79.2" fill="#2a2015"/>
<rect x="447" y="92.2" width="16.2" height="16.9" fill="#fbfbfb"/><path d="M453,102H462.2V106.6Q462.2,108.4 460.4,108.4H454.8Q453,108.4 453,106.6Z" fill="#e4e4e4" stroke="#5a5a5a" stroke-width="1"/><path d="M462.6,94.2V107" stroke="#4a4a4a" stroke-width="1.1"/><path d="M454.2,104.2H461M454.2,106.2H461" stroke="#a8a8a8" stroke-width=".8"/><polygon points="452.3,93.4 461.9,93.4 457.6,102.5 447.3,102.5" fill="#5cd6cf" stroke="#2c6f6c" stroke-width=".9" stroke-linejoin="round"/><path d="M453,96.9H457.4" stroke="#2a6f6a" stroke-width="1.4"/>
<g fill="none" stroke="#444" stroke-width="1.1"><path d="M503.8,75.9L506.5,78.6L509.2,75.9"/><path d="M535.6,100L538.3,102.7L541,100"/></g>
<polygon points="39,235.4 39,242 32.6,242" fill="#3a3a3a"/>
<defs><radialGradient id="eye"><stop offset="0" stop-color="#3f2f60"/><stop offset=".2" stop-color="#54467a"/><stop offset=".5" stop-color="#a59dbd"/><stop offset="1" stop-color="#dcdbe2" stop-opacity="0"/></radialGradient></defs>
<ellipse cx="54" cy="238.6" rx="6.4" ry="5.8" fill="url(#eye)"/>
<path d="M65.2,255.0H84.80000000000001M65.2,260.2H84.80000000000001M66.80,253.2V262.0M69.53,253.2V262.0M72.27,253.2V262.0M75.00,253.2V262.0M77.73,253.2V262.0M80.47,253.2V262.0M83.20,253.2V262.0" fill="none" stroke="#000" stroke-width="1.45"/>
<path d="M65.2,275.0H84.80000000000001M65.2,280.2H84.80000000000001M66.80,273.2V282.0M69.53,273.2V282.0M72.27,273.2V282.0M75.00,273.2V282.0M77.73,273.2V282.0M80.47,273.2V282.0M83.20,273.2V282.0" fill="none" stroke="#000" stroke-width="1.45"/>
<path d="M94.2,256.3L96.9,259.3L102.2,252.2" fill="none" stroke="#111" stroke-width="2"/>
<path d="M94.2,276.0L96.9,279.0L102.2,271.9" fill="none" stroke="#111" stroke-width="2"/>
<path d="M226.1,575.3L228.8,578.3L234.1,571.2" fill="none" stroke="#111" stroke-width="2"/>
<path d="M226.1,810.5999999999999L228.8,813.5999999999999L234.1,806.5" fill="none" stroke="#111" stroke-width="2"/>
<path d="M309.6,648.3000000000001L312.4,651.1L315.2,648.3000000000001M309.6,696.2L312.4,699.0L315.2,696.2M309.6,743.6L312.4,746.4L315.2,743.6M309.6,883.6L312.4,886.4L315.2,883.6M309.6,931.5000000000001L312.4,934.3000000000001L315.2,931.5000000000001M309.6,978.9L312.4,981.6999999999999L315.2,978.9" fill="none" stroke="#555" stroke-width="1.1"/>
<circle cx="27.3" cy="1080.8" r="9.5" fill="#fff" stroke="#000" stroke-width="1.2"/>
<circle cx="27.3" cy="1076.6" r="3.1" fill="#f6ee14" stroke="#1d8c1d" stroke-width="1.15"/><circle cx="27.3" cy="1076.6" r="1.1" fill="#1a1af0"/>
<circle cx="23.5" cy="1084.2" r="3.1" fill="#f6ee14" stroke="#1d8c1d" stroke-width="1.15"/><circle cx="23.5" cy="1084.2" r="1.1" fill="#1a1af0"/>
<circle cx="31.2" cy="1084.2" r="3.1" fill="#f6ee14" stroke="#1d8c1d" stroke-width="1.15"/><circle cx="31.2" cy="1084.2" r="1.1" fill="#1a1af0"/>
<path d="M160.4,1079.4L163.9,1082.9L167.4,1079.4" fill="none" stroke="#333" stroke-width="1.2"/>
<path d="M187,1085.5V1078.5A2.9,2.9 0 0 1 192.8,1078.5V1083.4A3.1,3.1 0 0 0 199,1083.4V1077" fill="none" stroke="#000" stroke-width="1.8"/><path d="M184.2,1083.6L187,1087L189.8,1083.6" fill="none" stroke="#000" stroke-width="1.6"/><circle cx="199.1" cy="1075.8" r="2.2" fill="#000"/>
<path d="M315.6,1078.8H335.0M315.6,1082.8H335.0M317.20,1077V1084.6M319.51,1077V1084.6M321.83,1077V1084.6M324.14,1077V1084.6M326.46,1077V1084.6M328.77,1077V1084.6M331.09,1077V1084.6M333.40,1077V1084.6" fill="none" stroke="#000" stroke-width="1.3"/>
<rect x="507.6" y="1075" width="6.4" height="11.6" fill="#c9cfc4"/><path d="M508,1078H514M508,1081H514M508,1084H514" stroke="#9fb096" stroke-width=".8"/><polygon points="498,1074 508.4,1072.4 508.4,1089.2 498,1087.4" fill="#6bb04a"/><path d="M501,1078L505,1083.6M505,1078L501,1083.6" stroke="#fff" stroke-width="1.3"/>
<defs><linearGradient id="er" x1="0" y1="0" x2="1" y2="1"><stop offset="0" stop-color="#3f63c8"/><stop offset=".45" stop-color="#7fc7a0"/><stop offset=".8" stop-color="#d9a34a"/><stop offset="1" stop-color="#d2402e"/></linearGradient><linearGradient id="er2" x1="0" y1="1" x2="1" y2="0"><stop offset=".5" stop-color="#8a5fc0" stop-opacity="0"/><stop offset="1" stop-color="#8a5fc0"/></linearGradient></defs>
<rect x="1528.2" y="1071" width="20.3" height="19.7" fill="url(#er)"/><rect x="1528.2" y="1071" width="20.3" height="19.7" fill="url(#er2)"/><path d="M1534.5,1086.5L1538.5,1075.5L1542.5,1086.5Z" fill="#9ad8b0" opacity=".75"/><path d="M1530.3,1073V1089" stroke="#e8f0ff" stroke-width="1.4" stroke-dasharray="1.4 1.6" opacity=".9"/><path d="M1536,1087.5H1545" stroke="#e9c24a" stroke-width="1.6" opacity=".8"/></svg>
</body></html>
